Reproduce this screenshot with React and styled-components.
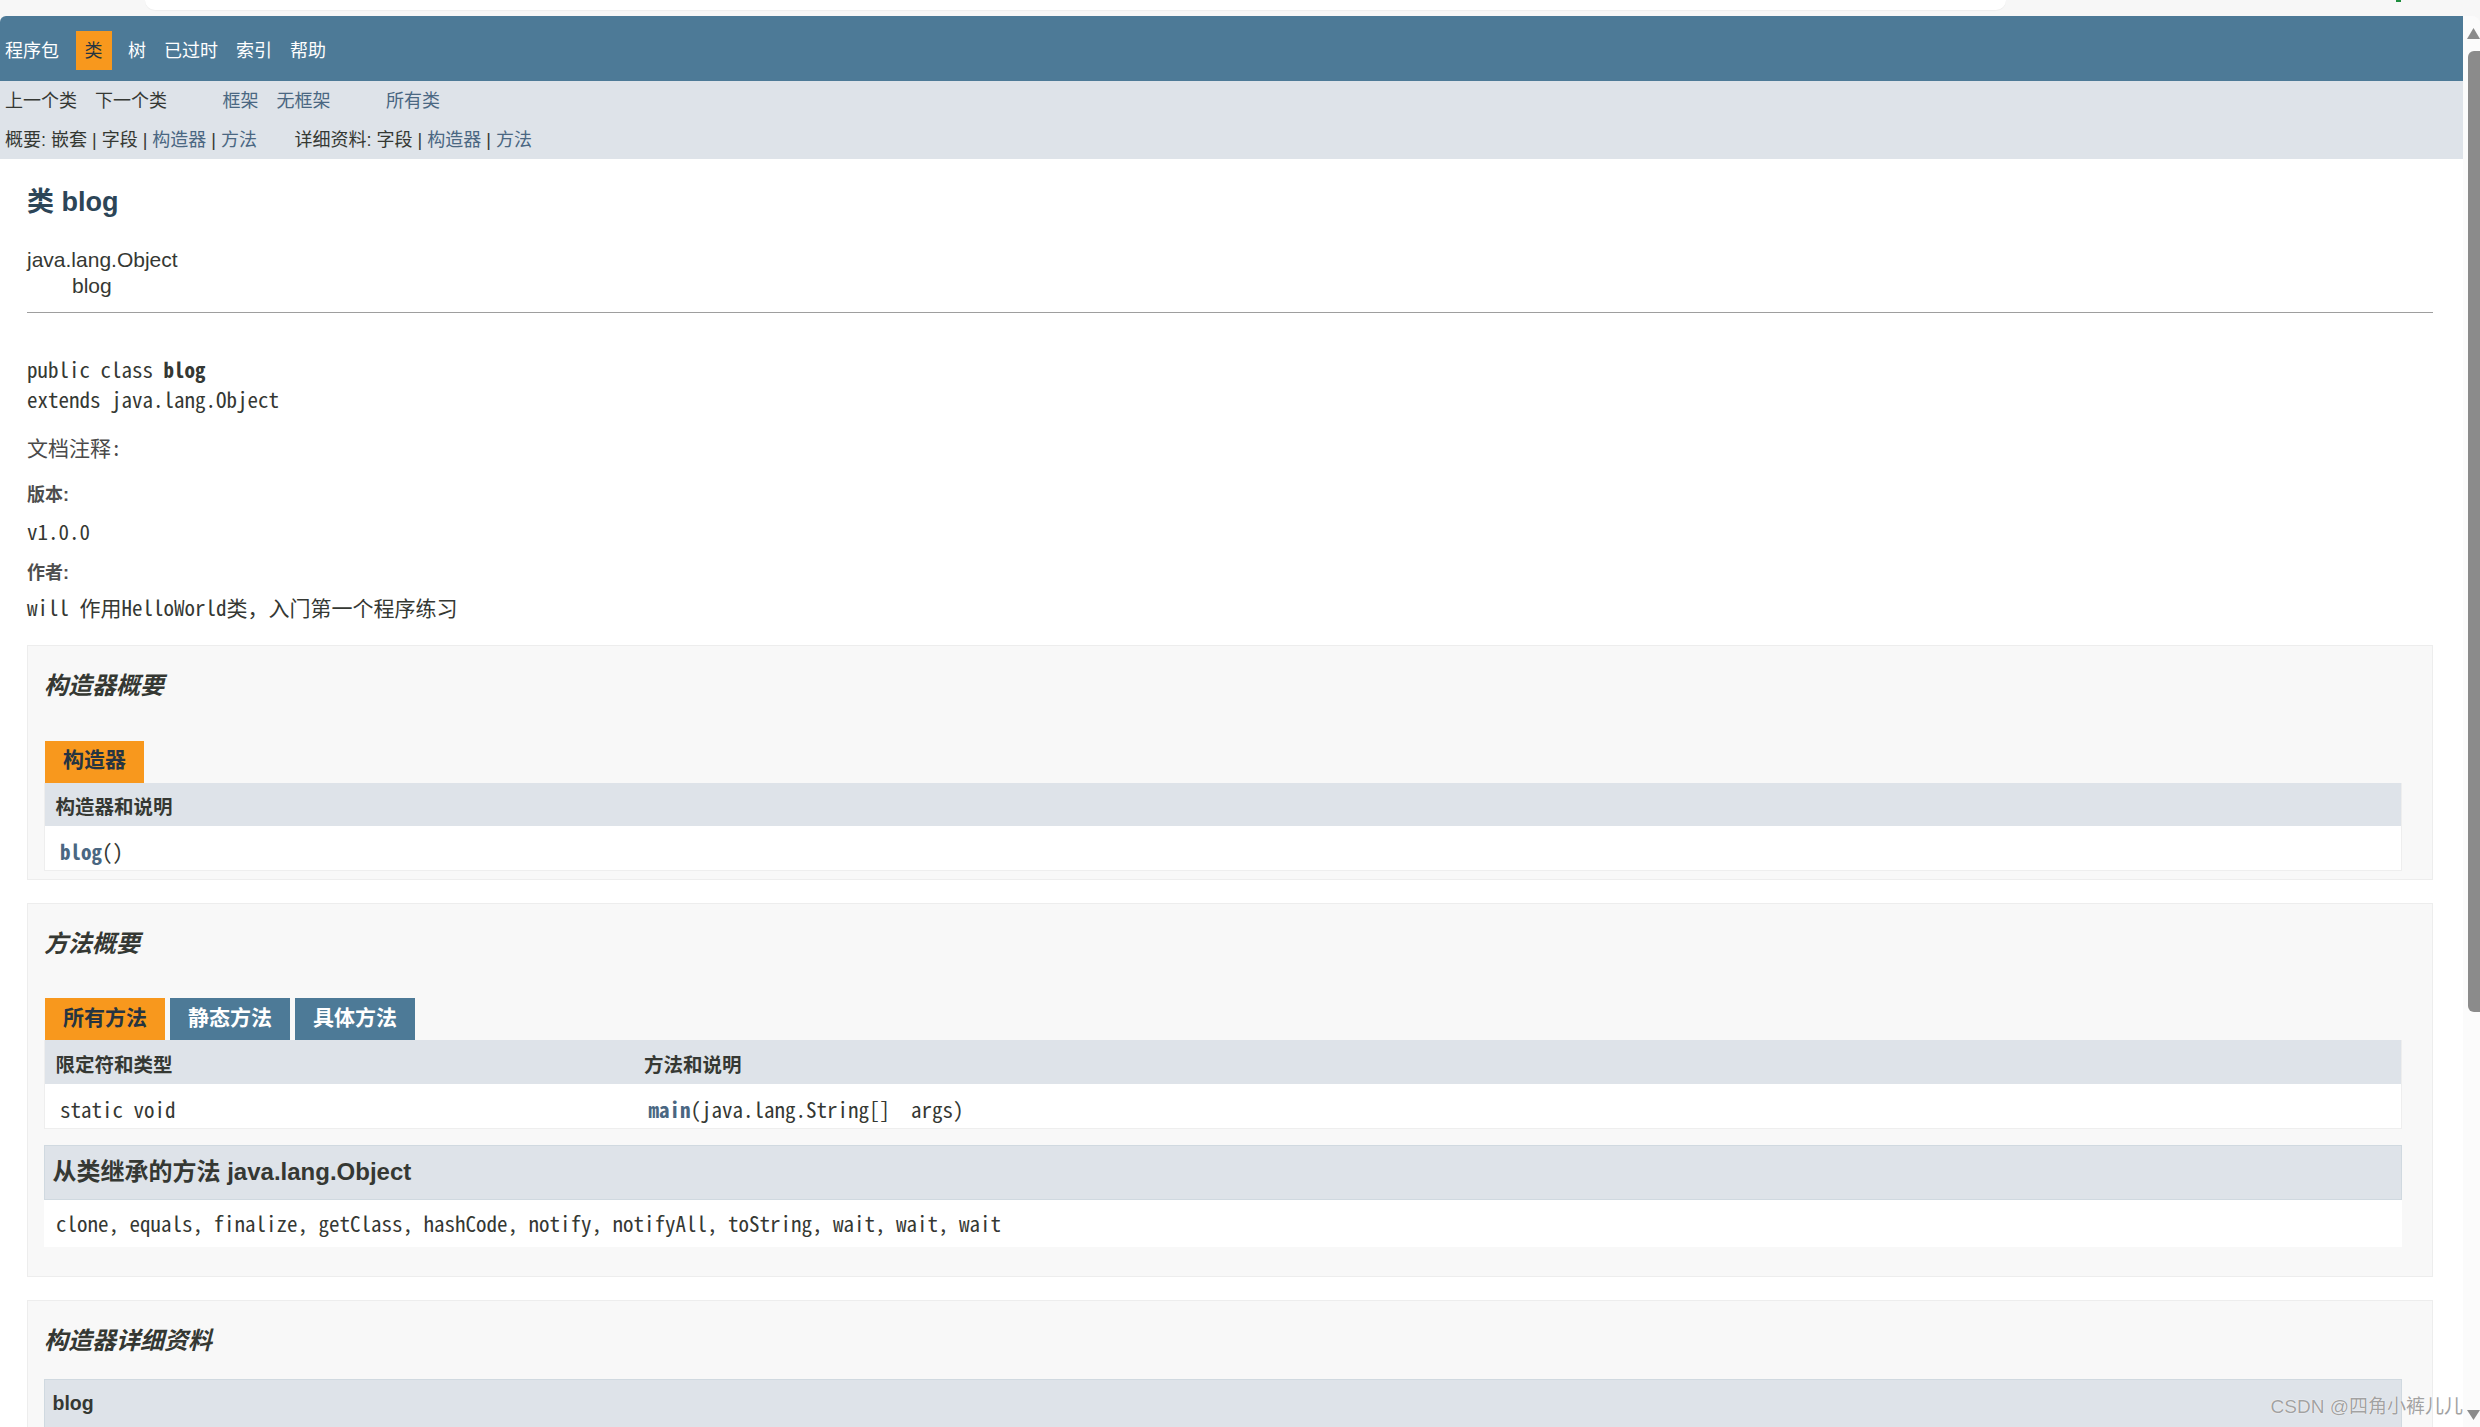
import React from 'react'
import styled, { createGlobalStyle } from 'styled-components'

const SANS = `"Liberation Sans", "Noto Sans CJK SC", sans-serif`
const MONO = `"Noto Sans Mono CJK SC", "Liberation Mono", "Noto Sans CJK SC", monospace`

const GlobalStyle = createGlobalStyle`
    html, body {
        margin: 0;
        padding: 0;
        overflow: hidden;
        background: #f7f7f7;
    }
    body {
        font-family: ${ SANS };
        color: #353833;
    }
    * { box-sizing: border-box; }
`

const Window = styled.div`
    position: relative;
    width: 2480px;
    height: 1427px;
    display: flex;
    flex-direction: column;
    background: #f7f7f7;
    overflow: hidden;
`

const ChromeStrip = styled.div`
    flex: none;
    height: 16px;
    display: flex;
    align-items: flex-start;
`

const AddressPill = styled.div`
    margin-left: 145px;
    width: 1861px;
    height: 10px;
    background: #fff;
    border-radius: 0 0 12px 12px;
    box-shadow: 0 1px 1px rgba(0, 0, 0, 0.04);
`

const StatusDot = styled.div`
    margin-left: 390px;
    width: 5px;
    height: 2px;
    background: #1e8e3e;
`

const Viewport = styled.div`
    flex: 1;
    display: flex;
    min-height: 0;
    border-radius: 6px 8px 0 0;
    overflow: hidden;
`

const Page = styled.div`
    flex: 1;
    background: #fff;
    overflow: hidden;
`

const Gutter = styled.div`
    flex: none;
    width: 17px;
    background: #fbfbfb;
    display: flex;
    flex-direction: column;
    align-items: flex-end;
`

const Arrow = styled.svg`
    display: block;
    margin: ${ p => p.$down ? '0 0 6px' : '12px 0 0' };
`

const Thumb = styled.div`
    margin-top: 12px;
    width: 12px;
    height: 961px;
    background: #8b8b8b;
    border-radius: 6px 0 0 6px;
`

const Spacer = styled.div`
    flex: 1;
`

const TopNav = styled.div`
    height: 65px;
    padding-top: 15px;
    background: #4d7a97;
`

const NavList = styled.ul`
    display: flex;
    margin: 0 0 0 -4px;
    padding: 0;
    list-style: none;
`

const NavItem = styled.li`
    padding: 7.5px 9px;
    margin: ${ p => p.$active ? '0 7.5px' : '0' };
    font-size: 18px;
    line-height: 24px;
    color: ${ p => p.$active ? '#253441' : '#fff' };
    background: ${ p => p.$active ? '#f8981d' : 'transparent' };
`

const SubNav = styled.div`
    height: 78px;
    background: #dee3e9;
    font-size: 18px;
    line-height: 24px;
`

const SubRow = styled.div`
    display: flex;
    padding: ${ p => p.$second ? '8px 0 0 5px' : '0' };
`

const SubList = styled.ul`
    display: flex;
    margin: 0 37.5px 0 ${ p => p.$first ? '-4px' : '0' };
    padding: 0;
    list-style: none;
`

const SubItem = styled.li`
    padding: 7.5px 9px;
`

const Crumbs = styled.div`
    margin-right: 37.5px;
    white-space: pre;
`

const Link = styled.a`
    color: #4a6782;
    text-decoration: none;
`

const Header = styled.div`
    padding: 25px 30px 0 27px;
`

const Title = styled.h2`
    margin: 0;
    font-size: 27px;
    line-height: 36px;
    font-weight: bold;
    color: #2c4557;
`

const Content = styled.div`
    padding: 0 30px 0 27px;
`

const Inheritance = styled.div`
    margin-top: 27px;
    font-size: 21px;
    line-height: 26px;
`

const InheritanceChild = styled.div`
    padding-left: 45px;
`

const Rule = styled.hr`
    margin: 13px 0 0;
    border: 0;
    border-top: 1px solid #9e9e9e;
`

const Signature = styled.pre`
    margin: ${ p => p.$top ?? 41 }px 0 0;
    font-family: ${ MONO };
    font-size: 21px;
    line-height: 30px;
`

const DocBlock = styled.div`
    margin-top: ${ p => p.$top || 0 }px;
    font-family: ${ MONO };
    font-size: 21px;
    line-height: 30px;
    color: ${ p => p.$muted ? '#4a4a4a' : '#353833' };
    white-space: pre;
`

const Label = styled.div`
    margin-top: ${ p => p.$top }px;
    font-size: 18px;
    line-height: 24px;
    font-weight: bold;
    color: #4e4e4e;
`

const Box = styled.section`
    margin-top: 23px;
    padding: 0 30px 7.5px 16px;
    background: #f8f8f8;
    border: 1px solid #ededed;
`

const BoxTitle = styled.h3`
    margin: 24px 0 0;
    font-size: 24px;
    line-height: 32px;
    font-weight: bold;
    font-style: italic;
    color: #353833;
`

const Tabs = styled.div`
    display: flex;
    gap: 5px;
    margin: 38.5px 0 0 1px;
`

const Tab = styled.span`
    padding: 7.5px 18px 10.5px;
    font-size: 21px;
    line-height: 24px;
    font-weight: bold;
    color: ${ p => p.$active ? '#253441' : '#fff' };
    background: ${ p => p.$active ? '#f8981d' : '#4d7a97' };
`

const Table = styled.table`
    width: 100%;
    border-collapse: collapse;
    border-left: 1px solid #eee;
    border-right: 1px solid #eee;
    border-bottom: 1px solid #eee;
`

const Th = styled.th`
    padding: 11.5px 4.5px 4.5px 10.5px;
    background: #dee3e9;
    text-align: left;
    font-size: 19.5px;
    line-height: 27.5px;
    font-weight: bold;
    color: #353833;
    width: ${ p => p.$w ? `${ p.$w }px` : 'auto' };
`

const Td = styled.td`
    padding: 11px 4.5px 4.5px 15px;
    background: #fff;
    font-family: ${ MONO };
    font-size: 21px;
    line-height: 28.5px;
    white-space: pre;
`

const MemberLink = styled(Link)`
    font-weight: bold;
`

const Inherited = styled.div`
    margin: 16px 0 21.5px;
    background: #fff;
`

const InheritedTitle = styled.h3`
    margin: 0;
    padding: 10.5px 7.5px;
    font-size: 24px;
    line-height: 32px;
    font-weight: bold;
    background: #dee3e9;
    border: 1px solid #d0d9e0;
`

const InheritedCode = styled.div`
    padding: 8px 12px 9px;
    font-family: ${ MONO };
    font-size: 21px;
    line-height: 30px;
`

const DetailHeader = styled.h4`
    margin: 22px 0 0;
    padding: 10.5px 7.5px;
    font-size: 19.5px;
    line-height: 27.5px;
    font-weight: bold;
    background: #dee3e9;
    border: 1px solid #d0d9e0;
`

const Watermark = styled.div`
    position: absolute;
    right: 17px;
    top: 1395px;
    font-size: 19px;
    line-height: 24px;
    color: #a2a2a2;
    text-shadow: 0 0 1px #fff, 0 0 1px #fff;
    font-family: ${ SANS };
`

const navItems = ['程序包', '类', '树', '已过时', '索引', '帮助']
const inheritedMethods = 'clone, equals, finalize, getClass, hashCode, notify, notifyAll, toString, wait, wait, wait'

const ScrollArrow = ({ down }) => (
    <Arrow $down={ down } width="13" height="11" viewBox="0 0 13 11">
        { down
            ? <polygon points="0,0 13,0 6.5,10" fill="#8b8b8b" />
            : <polygon points="6.5,0 13,11 0,11" fill="#8b8b8b" /> }
    </Arrow>
)

const Navigation = () => (
    <>
        <TopNav>
            <NavList>
                { navItems.map(item => <NavItem key={ item } $active={ item === '类' }>{ item }</NavItem>) }
            </NavList>
        </TopNav>
        <SubNav>
            <SubRow>
                <SubList $first>
                    <SubItem>上一个类</SubItem>
                    <SubItem>下一个类</SubItem>
                </SubList>
                <SubList>
                    <SubItem><Link>框架</Link></SubItem>
                    <SubItem><Link>无框架</Link></SubItem>
                </SubList>
                <SubList>
                    <SubItem><Link>所有类</Link></SubItem>
                </SubList>
            </SubRow>
            <SubRow $second>
                <Crumbs>概要: 嵌套 | 字段 | <Link>构造器</Link> | <Link>方法</Link></Crumbs>
                <Crumbs>详细资料: 字段 | <Link>构造器</Link> | <Link>方法</Link></Crumbs>
            </SubRow>
        </SubNav>
    </>
)

const ClassDescription = () => (
    <>
        <Inheritance>
            <div>java.lang.Object</div>
            <InheritanceChild>blog</InheritanceChild>
        </Inheritance>
        <Rule />
        <Signature>public class <b>blog</b>{ '\n' }extends java.lang.Object</Signature>
        <DocBlock $top={ 18 } $muted>文档注释:</DocBlock>
        <Label $top={ 21 }>版本:</Label>
        <DocBlock $top={ 9 }>v1.0.0</DocBlock>
        <Label $top={ 15 }>作者:</Label>
        <DocBlock $top={ 7 }>will 作用HelloWorld类，入门第一个程序练习</DocBlock>
    </>
)

const ConstructorSummary = () => (
    <Box>
        <BoxTitle>构造器概要</BoxTitle>
        <Tabs><Tab $active>构造器</Tab></Tabs>
        <Table>
            <thead>
                <tr><Th>构造器和说明</Th></tr>
            </thead>
            <tbody>
                <tr><Td><MemberLink>blog</MemberLink>()</Td></tr>
            </tbody>
        </Table>
    </Box>
)

const MethodSummary = () => (
    <Box>
        <BoxTitle>方法概要</BoxTitle>
        <Tabs>
            <Tab $active>所有方法</Tab>
            <Tab>静态方法</Tab>
            <Tab>具体方法</Tab>
        </Tabs>
        <Table>
            <thead>
                <tr>
                    <Th $w={ 589 }>限定符和类型</Th>
                    <Th>方法和说明</Th>
                </tr>
            </thead>
            <tbody>
                <tr>
                    <Td>static void</Td>
                    <Td><MemberLink>main</MemberLink>(java.lang.String[]{ '\u00a0\u00a0' }args)</Td>
                </tr>
            </tbody>
        </Table>
        <Inherited>
            <InheritedTitle>从类继承的方法 java.lang.Object</InheritedTitle>
            <InheritedCode>{ inheritedMethods }</InheritedCode>
        </Inherited>
    </Box>
)

const ConstructorDetail = () => (
    <Box>
        <BoxTitle>构造器详细资料</BoxTitle>
        <DetailHeader>blog</DetailHeader>
        <Signature $top={ 12 }>public blog()</Signature>
    </Box>
)

export default function App() {
    return (
        <Window>
            <GlobalStyle />
            <ChromeStrip>
                <AddressPill />
                <StatusDot />
            </ChromeStrip>
            <Viewport>
                <Page>
                    <Navigation />
                    <Header>
                        <Title>类 blog</Title>
                    </Header>
                    <Content>
                        <ClassDescription />
                        <ConstructorSummary />
                        <MethodSummary />
                        <ConstructorDetail />
                    </Content>
                </Page>
                <Gutter>
                    <ScrollArrow />
                    <Thumb />
                    <Spacer />
                    <ScrollArrow down />
                </Gutter>
            </Viewport>
            <Watermark>CSDN @四角小裤儿儿</Watermark>
        </Window>
    )
}
